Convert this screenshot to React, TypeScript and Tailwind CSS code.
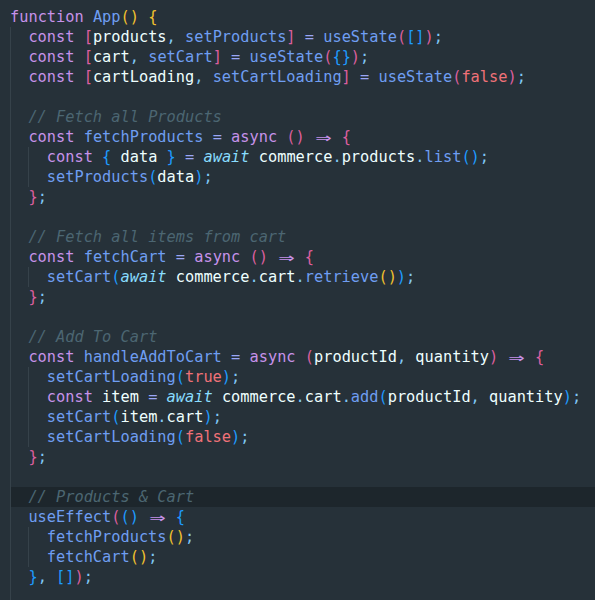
import React from "react";

type Tok = [string, string];

const C: Record<string, string> = {
  k: "text-[#c792ea]",
  f: "text-[#6f9ef2]",
  v: "text-[#eeffff]",
  o: "text-[#9aa6f5]",
  p: "text-[#80c8f5]",
  b1: "text-[#f2c12e]",
  b2: "text-[#dc5f9f]",
  b3: "text-[#1e9bff]",
  bo: "text-[#f07178]",
  aw: "text-[#89ddff] italic",
  c: "text-[#4c6672] italic",
  ar: "text-[#c792ea]",
  s: "",
};

type Line = { g: number; t: Tok[]; hl?: boolean };

const A: Tok = ["ar", "⇒"];

const lines: Line[] = [
  { g: 0, t: [["k", "function"], ["s", " "], ["f", "App"], ["b1", "()"], ["s", " "], ["b1", "{"]] },
  { g: 1, t: [["k", "const"], ["s", " "], ["b2", "["], ["v", "products"], ["p", ","], ["s", " "], ["f", "setProducts"], ["b2", "]"], ["s", " "], ["o", "="], ["s", " "], ["f", "useState"], ["b2", "("], ["b3", "[]"], ["b2", ")"], ["p", ";"]] },
  { g: 1, t: [["k", "const"], ["s", " "], ["b2", "["], ["v", "cart"], ["p", ","], ["s", " "], ["f", "setCart"], ["b2", "]"], ["s", " "], ["o", "="], ["s", " "], ["f", "useState"], ["b2", "("], ["b3", "{}"], ["b2", ")"], ["p", ";"]] },
  { g: 1, t: [["k", "const"], ["s", " "], ["b2", "["], ["v", "cartLoading"], ["p", ","], ["s", " "], ["f", "setCartLoading"], ["b2", "]"], ["s", " "], ["o", "="], ["s", " "], ["f", "useState"], ["b2", "("], ["bo", "false"], ["b2", ")"], ["p", ";"]] },
  { g: 1, t: [] },
  { g: 1, t: [["c", "// Fetch all Products"]] },
  { g: 1, t: [["k", "const"], ["s", " "], ["f", "fetchProducts"], ["s", " "], ["o", "="], ["s", " "], ["k", "async"], ["s", " "], ["b2", "()"], ["s", " "], A, ["s", " "], ["b2", "{"]] },
  { g: 2, t: [["k", "const"], ["s", " "], ["b3", "{"], ["s", " "], ["v", "data"], ["s", " "], ["b3", "}"], ["s", " "], ["o", "="], ["s", " "], ["aw", "await"], ["s", " "], ["v", "commerce"], ["p", "."], ["v", "products"], ["p", "."], ["f", "list"], ["b3", "()"], ["p", ";"]] },
  { g: 2, t: [["f", "setProducts"], ["b3", "("], ["v", "data"], ["b3", ")"], ["p", ";"]] },
  { g: 1, t: [["b2", "}"], ["p", ";"]] },
  { g: 1, t: [] },
  { g: 1, t: [["c", "// Fetch all items from cart"]] },
  { g: 1, t: [["k", "const"], ["s", " "], ["f", "fetchCart"], ["s", " "], ["o", "="], ["s", " "], ["k", "async"], ["s", " "], ["b2", "()"], ["s", " "], A, ["s", " "], ["b2", "{"]] },
  { g: 2, t: [["f", "setCart"], ["b3", "("], ["aw", "await"], ["s", " "], ["v", "commerce"], ["p", "."], ["v", "cart"], ["p", "."], ["f", "retrieve"], ["b1", "()"], ["b3", ")"], ["p", ";"]] },
  { g: 1, t: [["b2", "}"], ["p", ";"]] },
  { g: 1, t: [] },
  { g: 1, t: [["c", "// Add To Cart"]] },
  { g: 1, t: [["k", "const"], ["s", " "], ["f", "handleAddToCart"], ["s", " "], ["o", "="], ["s", " "], ["k", "async"], ["s", " "], ["b2", "("], ["v", "productId"], ["p", ","], ["s", " "], ["v", "quantity"], ["b2", ")"], ["s", " "], A, ["s", " "], ["b2", "{"]] },
  { g: 2, t: [["f", "setCartLoading"], ["b3", "("], ["bo", "true"], ["b3", ")"], ["p", ";"]] },
  { g: 2, t: [["k", "const"], ["s", " "], ["v", "item"], ["s", " "], ["o", "="], ["s", " "], ["aw", "await"], ["s", " "], ["v", "commerce"], ["p", "."], ["v", "cart"], ["p", "."], ["f", "add"], ["b3", "("], ["v", "productId"], ["p", ","], ["s", " "], ["v", "quantity"], ["b3", ")"], ["p", ";"]] },
  { g: 2, t: [["f", "setCart"], ["b3", "("], ["v", "item"], ["p", "."], ["v", "cart"], ["b3", ")"], ["p", ";"]] },
  { g: 2, t: [["f", "setCartLoading"], ["b3", "("], ["bo", "false"], ["b3", ")"], ["p", ";"]] },
  { g: 1, t: [["b2", "}"], ["p", ";"]] },
  { g: 1, t: [] },
  { g: 1, t: [["c", "// Products & Cart"]], hl: true },
  { g: 1, t: [["f", "useEffect"], ["b2", "("], ["b3", "()"], ["s", " "], A, ["s", " "], ["b3", "{"]] },
  { g: 2, t: [["f", "fetchProducts"], ["b1", "()"], ["p", ";"]] },
  { g: 2, t: [["f", "fetchCart"], ["b1", "()"], ["p", ";"]] },
  { g: 1, t: [["b3", "}"], ["p", ","], ["s", " "], ["b3", "[]"], ["b2", ")"], ["p", ";"]] },
  { g: 1, t: [] },
];

function Tokens({ t }: { t: Tok[] }) {
  return (
    <>
      {t.map(([k, s], i) =>
        k === "ar" ? (
          <span key={i} className={`${C.ar} inline-block w-[2ch] text-center`}>
            <span className="inline-block scale-x-[1.75] scale-y-[1.15]">{s}</span>
          </span>
        ) : (
          <span key={i} className={C[k]}>
            {s}
          </span>
        )
      )}
    </>
  );
}

export default function App() {
  return (
    <div
      className="w-[595px] h-[600px] overflow-hidden bg-[#263139] pt-[7px] text-[15.3px] leading-[20px] text-[#eeffff]"
      style={{ fontFamily: '"DejaVu Sans Mono", "Liberation Mono", monospace' }}
    >
      {lines.map((l, i) => (
        <div key={i} className="flex h-[20px] pl-[10px]">
          <div className={`flex flex-1 h-full whitespace-pre ${l.hl ? "bg-[#1d262c]" : ""}`}>
            {Array.from({ length: l.g }).map((_, j) => (
              <span key={j} className="inline-block w-[2ch] h-full shrink-0 border-l border-[#36424a]" />
            ))}
            <span>
              <Tokens t={l.t} />
            </span>
          </div>
        </div>
      ))}
    </div>
  );
}
